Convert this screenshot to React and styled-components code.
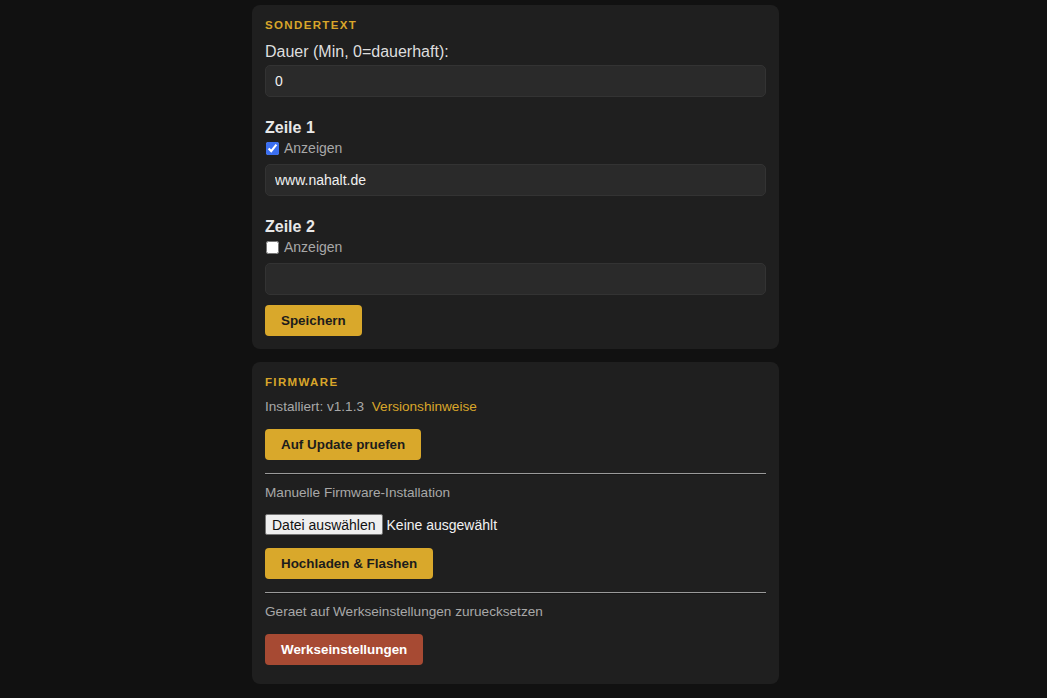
import React, { useState } from 'react';
import styled, { createGlobalStyle } from 'styled-components';

const GlobalStyle = createGlobalStyle`
  html, body {
    margin: 0;
    padding: 0;
    background: #111111;
  }
  body {
    font-family: 'Liberation Sans', Arial, sans-serif;
    color: #e0e0e0;
  }
`;

const Page = styled.div`
  width: 1031px;
  padding: 5px 0 13px;
`;

const Column = styled.div`
  width: 527px;
  margin: 0 auto;
  display: flex;
  flex-direction: column;
  gap: 13px;
`;

const Card = styled.section`
  background: #1f1f1f;
  border-radius: 8px;
  padding: 13px 13px ${(p) => p.$pb || 13}px;
  display: flex;
  flex-direction: column;
`;

const CardTitle = styled.h2`
  margin: 0 0 10px;
  font-size: 11.5px;
  line-height: 14px;
  font-weight: 700;
  letter-spacing: 1.35px;
  color: #d9a62a;
  text-transform: uppercase;
`;

const FieldLabel = styled.label`
  font-size: 16px;
  line-height: 20px;
  color: #dedede;
  margin-bottom: 3px;
`;

const TextInput = styled.input`
  box-sizing: border-box;
  width: 100%;
  height: 32px;
  padding: 0 9px;
  background: #2a2a2a;
  border: 1px solid #333333;
  border-radius: 5px;
  color: #f0f0f0;
  font-family: 'Liberation Sans', Arial, sans-serif;
  font-size: 14px;
  outline: none;
`;

const LineHeading = styled.h3`
  margin: 21px 0 0;
  font-size: 16px;
  line-height: 20px;
  font-weight: 700;
  color: #e8e8e8;
`;

const CheckRow = styled.label`
  display: flex;
  align-items: center;
  gap: 5px;
  font-size: 14px;
  line-height: 18px;
  color: #a8a8a8;
  margin: 1px 0 7px;

  input {
    margin: 0 0 0 1px;
    width: 13px;
    height: 13px;
    accent-color: #3b6ff0;
  }
`;

const ActionButton = styled.button`
  align-self: flex-start;
  height: 31px;
  padding: 0 16px;
  border: none;
  border-radius: 4px;
  background: ${(p) => (p.$danger ? '#a74a33' : '#d9a82b')};
  color: ${(p) => (p.$danger ? '#ffffff' : '#1c1c1c')};
  font-family: 'Liberation Sans', Arial, sans-serif;
  font-weight: 700;
  font-size: 13.4px;
  cursor: pointer;
  margin-top: ${(p) => p.$mt || 0}px;
`;

const Info = styled.p`
  margin: 0;
  font-size: 13.6px;
  line-height: 16px;
  color: #a8a8a8;
`;

const Link = styled.a`
  color: #d9a62a;
  text-decoration: none;
  margin-left: 4px;
`;

const Divider = styled.hr`
  width: 100%;
  margin: 13px 0 10px;
  border: 0;
  border-top: 1px solid #9a9a9a;
  border-bottom: 1px solid #161616;
`;

const FileRow = styled.label`
  display: flex;
  align-items: center;
  gap: 4px;
  margin-top: 13px;
  font-size: 14px;
  color: #f2f2f2;
  cursor: pointer;

  input {
    display: none;
  }
`;

const FileButton = styled.span`
  box-sizing: border-box;
  height: 21px;
  display: inline-flex;
  align-items: center;
  padding: 0 6px;
  background: #efefef;
  border: 1px solid #767676;
  border-radius: 2px;
  color: #111111;
  font-size: 14px;
`;

export default function App() {
  const [dauer, setDauer] = useState('0');
  const [zeile1, setZeile1] = useState('www.nahalt.de');
  const [zeile2, setZeile2] = useState('');
  const [show1, setShow1] = useState(true);
  const [show2, setShow2] = useState(false);

  return (
    <>
      <GlobalStyle />
      <Page>
        <Column>
          <Card>
            <CardTitle>Sondertext</CardTitle>
            <FieldLabel>Dauer (Min, 0=dauerhaft):</FieldLabel>
            <TextInput value={dauer} onChange={(e) => setDauer(e.target.value)} />

            <LineHeading>Zeile 1</LineHeading>
            <CheckRow>
              <input type="checkbox" checked={show1} onChange={(e) => setShow1(e.target.checked)} />
              Anzeigen
            </CheckRow>
            <TextInput value={zeile1} onChange={(e) => setZeile1(e.target.value)} />

            <LineHeading>Zeile 2</LineHeading>
            <CheckRow>
              <input type="checkbox" checked={show2} onChange={(e) => setShow2(e.target.checked)} />
              Anzeigen
            </CheckRow>
            <TextInput value={zeile2} onChange={(e) => setZeile2(e.target.value)} />

            <ActionButton $mt={10}>Speichern</ActionButton>
          </Card>

          <Card $pb={19}>
            <CardTitle>Firmware</CardTitle>
            <Info>
              Installiert: v1.1.3 <Link href="#">Versionshinweise</Link>
            </Info>
            <ActionButton $mt={14}>Auf Update pruefen</ActionButton>

            <Divider />
            <Info>Manuelle Firmware-Installation</Info>
            <FileRow>
              <input type="file" />
              <FileButton>Datei auswählen</FileButton>
              Keine ausgewählt
            </FileRow>
            <ActionButton $mt={13}>Hochladen &amp; Flashen</ActionButton>

            <Divider />
            <Info>Geraet auf Werkseinstellungen zuruecksetzen</Info>
            <ActionButton $danger $mt={14}>Werkseinstellungen</ActionButton>
          </Card>
        </Column>
      </Page>
    </>
  );
}
